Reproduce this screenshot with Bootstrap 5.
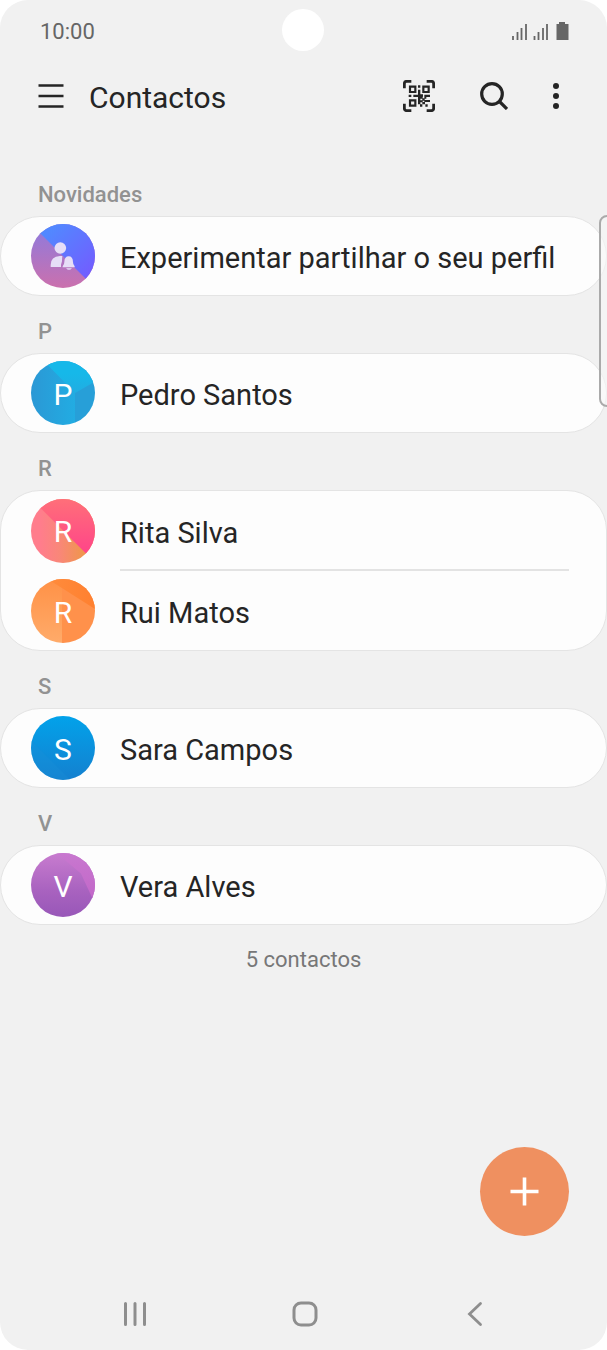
<!DOCTYPE html>
<html lang="pt">
<head>
<meta charset="utf-8">
<meta name="viewport" content="width=device-width, initial-scale=1">
<title>Contactos</title>
<link href="https://cdn.jsdelivr.net/npm/bootstrap@5.3.0/dist/css/bootstrap.min.css" rel="stylesheet">
<style>
body { background: #fff; font-family: Roboto, sans-serif; color: #252525; }
svg { display: block; }
.screen { background: #f1f1f1; border-radius: 28px; }
.status-bar { height: 60px; padding: 2px 38px 0 40px; font-size: 22px; color: #666; }
.camera { width: 42px; height: 42px; top: 9px; left: 50%; margin-left: -22px; background: #fff; }
.app-bar { height: 72px; padding: 0 48px 0 38px; margin-bottom: 27px; }
.app-bar h1 { font-size: 30px; line-height: 36px; font-weight: 400; margin: 3px 0 0 25px; }
.app-tools { gap: 45px; }
.icon-btn { border: 0; padding: 0; background: none; color: #252525; }
.group-title { font-size: 22px; line-height: 26px; font-weight: 500; color: #929292; margin: 0; padding: 23px 38px 8px; }
.contacts { background: #fdfdfd; border: 1px solid #e4e4e4; border-radius: 40px; }
.contact { height: 78px; padding: 0 37px 0 30px; gap: 25px; color: #252525; font-size: 29px; text-decoration: none; }
.contact .name { line-height: 34px; padding-top: 4px; }
.contact.divided { height: 79px; position: relative; }
.divided::after { content: ""; position: absolute; left: 119px; right: 37px; bottom: -1px; height: 2px; background: #e3e3e3; }
.divided + .contact { height: 80px; padding-top: 2px; }
.avatar { width: 64px; height: 64px; color: #fff; font-size: 30px; line-height: 36px; padding-top: 3px; position: relative; isolation: isolate; overflow: hidden; }
.avatar::before { content: ""; position: absolute; inset: 0; z-index: -1; }
.av-profile { background: linear-gradient(#8b7be0, #cb70ad); padding: 0; }
.av-profile::before { background: linear-gradient(135deg, #5288ff 20%, #745aff 90%); clip-path: polygon(0 0, 100% 0, 100% 100%); }
.av-p { background: linear-gradient(90deg, #2b98d5, #22ace2 69%, #279fd8 69%); }
.av-p::before { background: linear-gradient(#16b8e9 20%, #25a9df 60%); clip-path: polygon(20% 0, 100% 0, 100% 32%, 69% 50%); }
.av-rita { background: linear-gradient(90deg, #ff7d8c 15%, #f98778 45%, #f0954f 80%); }
.av-rita::before { background: linear-gradient(#ff6f79, #ff4788 80%); clip-path: polygon(0 0, 100% 0, 100% 100%); }
.av-rui { background: linear-gradient(90deg, transparent 48%, #ff914b 48%), linear-gradient(#ff9146, #ffab6a); }
.av-rui::before { background: linear-gradient(90deg, #ff9040, #ff8030); clip-path: polygon(26% 0, 100% 0, 100% 47%); }
.av-s { background: linear-gradient(#02a2ea, #1480cf); }
.av-s::before { background: #1c8fd855; clip-path: polygon(0 38%, 62% 100%, 0 100%); }
.av-v { background: linear-gradient(#c87ccf, #a862bf 60%, #9857b8); }
.av-v::before { background: linear-gradient(#c878cf, #c060c6); clip-path: polygon(40% 0, 78% 32%, 97% 73%, 100% 73%, 100% 0); }
.total { font-size: 22px; line-height: 26px; color: #777; padding-top: 22px; }
.fab { width: 89px; height: 89px; margin: 0 38px 44px; background: #ef9060; color: #fff; border: 0; }
.system-nav { height: 70px; padding: 0 47px 3px 50px; }
.system-nav .icon-btn { color: #8e8e8e; }
.edge-handle { width: 10px; height: 192px; top: 215px; right: -2px; border: 2px solid #aaa; border-radius: 8px 0 0 8px; background: #f7f7f799; }
</style>
</head>
<body>
<div class="screen min-vh-100 d-flex flex-column position-relative overflow-hidden">
  <div class="status-bar d-flex align-items-center justify-content-between">
    <span>10:00</span>
    <span class="camera position-absolute rounded-circle"></span>
    <svg width="58" height="20" viewBox="0 0 58 20" fill="none" stroke="#666" stroke-width="1.800" aria-hidden="true">
      <path d="M2 15v4M6.500 11v8M10.500 7v12M15 3v16M23.500 15v4M27.500 11v8M32 7v12M36 3v16"/>
      <path d="M48 1h6v2h3.500v16H45.500V3H48z" fill="#666" stroke="none"/>
    </svg>
  </div>

  <header class="app-bar d-flex align-items-center">
    <button class="icon-btn" type="button" aria-label="Menu">
      <svg width="26" height="26" viewBox="0 0 26 26" stroke="currentColor" stroke-width="2.600"><path d="M.5 2.500h25M.5 13h25M.5 23.500h25"/></svg>
    </button>
    <h1>Contactos</h1>
    <div class="app-tools ms-auto d-flex align-items-center">
      <button class="icon-btn" type="button" aria-label="Código QR">
        <svg width="32" height="32" viewBox="0 0 96 96" fill="none" stroke="currentColor">
          <path d="M4 25V11q0-7 7-7h14M71 4h14q7 0 7 7v14M4 71v14q0 7 7 7h14M71 92h14q7 0 7-7V71" stroke-width="8.500"/>
          <path d="M21 20h16v16H21zM61 20h16v16H61zM21 61h16v16H21z" stroke-width="6.500"/>
          <path d="M45 16h7v7h-7zM45 29h7v14h8v7h-8v7h-7v-6H31v-7h14zM17 44h8v7h-8zM64 44h17v7H64zM45 55h7v18h-7zM52 50h7v6h-7zM58 55h7v7h-7zM64 50h6v6h-6zM52 61h7v6h-7zM58 66h8v7h-8zM64 60h17v6H64zM51 73h7v7h-7zM67 73h7v7h-7z" fill="currentColor" stroke="none"/>
        </svg>
      </button>
      <button class="icon-btn" type="button" aria-label="Pesquisar">
        <svg width="28" height="28" viewBox="0 0 28 28" fill="none" stroke="currentColor" stroke-width="3.200"><circle cx="12" cy="12" r="10.300"/><path d="M19 19l8 8"/></svg>
      </button>
      <button class="icon-btn" type="button" aria-label="Mais opções">
        <svg width="6" height="26" viewBox="0 0 6 26" fill="currentColor"><circle cx="3" cy="3" r="3"/><circle cx="3" cy="13" r="3"/><circle cx="3" cy="23" r="3"/></svg>
      </button>
    </div>
  </header>

  <main class="flex-grow-1 d-flex flex-column">
    <h2 class="group-title">Novidades</h2>
    <div class="contacts">
      <a class="contact d-flex align-items-center" href="#">
        <span class="avatar av-profile rounded-circle">
          <svg width="64" height="64" viewBox="0 0 192 192" fill="#e6def7"><circle cx="88" cy="72" r="17.500"/><path d="M59 129v-6q0-26 28-27h7q-1 9-1 16l-3 10v7zM95 127q5-5 5-13c0-11 5-17 13-17s13 6 13 17q0 8 5 13v3H95zM105 133h18q-9 9-18 0z"/></svg>
        </span>
        <span class="name">Experimentar partilhar o seu perfil</span>
      </a>
    </div>

    <h2 class="group-title">P</h2>
    <div class="contacts">
      <a class="contact d-flex align-items-center" href="#">
        <span class="avatar av-p rounded-circle d-flex align-items-center justify-content-center">P</span>
        <span class="name">Pedro Santos</span>
      </a>
    </div>

    <h2 class="group-title">R</h2>
    <div class="contacts">
      <a class="contact divided d-flex align-items-center" href="#">
        <span class="avatar av-rita rounded-circle d-flex align-items-center justify-content-center">R</span>
        <span class="name">Rita Silva</span>
      </a>
      <a class="contact d-flex align-items-center" href="#">
        <span class="avatar av-rui rounded-circle d-flex align-items-center justify-content-center">R</span>
        <span class="name">Rui Matos</span>
      </a>
    </div>

    <h2 class="group-title">S</h2>
    <div class="contacts">
      <a class="contact d-flex align-items-center" href="#">
        <span class="avatar av-s rounded-circle d-flex align-items-center justify-content-center">S</span>
        <span class="name">Sara Campos</span>
      </a>
    </div>

    <h2 class="group-title">V</h2>
    <div class="contacts">
      <a class="contact d-flex align-items-center" href="#">
        <span class="avatar av-v rounded-circle d-flex align-items-center justify-content-center">V</span>
        <span class="name">Vera Alves</span>
      </a>
    </div>

    <p class="total text-center mb-4">5 contactos</p>
    <button class="fab rounded-circle mt-auto align-self-end d-flex align-items-center justify-content-center" type="button" aria-label="Adicionar contacto">
      <svg width="29" height="29" viewBox="0 0 29 29" stroke="currentColor" stroke-width="3.600"><path d="M.5 14.500h28M14.500 .5v28"/></svg>
    </button>
  </main>

  <nav class="system-nav d-flex align-items-center" aria-label="Sistema">
    <button class="icon-btn flex-fill d-flex justify-content-center" type="button" aria-label="Recentes">
      <svg width="26" height="26" viewBox="0 0 26 26" stroke="currentColor" stroke-width="3" stroke-linecap="round"><path d="M3.500 2.500v21M13 2.500v21M22.500 2.500v21"/></svg>
    </button>
    <button class="icon-btn flex-fill d-flex justify-content-center" type="button" aria-label="Início">
      <svg width="26" height="26" viewBox="0 0 26 26" fill="none" stroke="currentColor" stroke-width="3"><rect x="2" y="2" width="22" height="22" rx="7"/></svg>
    </button>
    <button class="icon-btn flex-fill d-flex justify-content-center" type="button" aria-label="Voltar">
      <svg width="26" height="26" viewBox="0 0 26 26" fill="none" stroke="currentColor" stroke-width="2.800" stroke-linecap="round"><path d="M18.500 2.500L7.500 13l11 10.500"/></svg>
    </button>
  </nav>
  <span class="edge-handle position-absolute"></span>
</div>
<script src="https://cdn.jsdelivr.net/npm/bootstrap@5.3.0/dist/js/bootstrap.bundle.min.js"></script>
</body>
</html>
